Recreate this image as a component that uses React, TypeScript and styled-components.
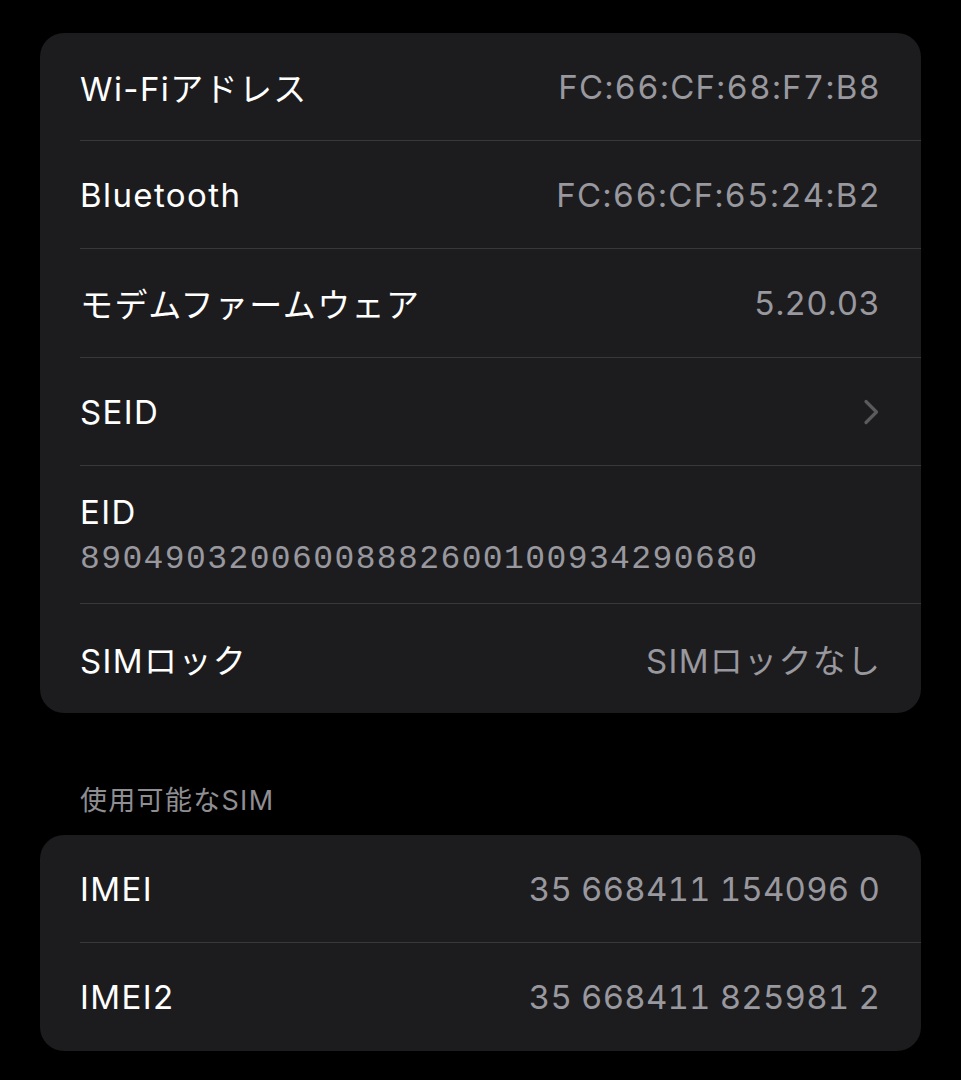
import React from "react";
import styled, { createGlobalStyle } from "styled-components";

const GlobalStyle = createGlobalStyle`
  html, body {
    margin: 0;
    padding: 0;
    background: #000000;
  }
  body {
    font-family: Inter, "Noto Sans CJK JP", sans-serif;
    -webkit-font-smoothing: antialiased;
  }
`;

const Page = styled.div`
  width: 961px;
  min-height: 1080px;
  box-sizing: border-box;
  padding: 33px 40px 0 40px;
  background: #000000;
  display: flex;
  flex-direction: column;
`;

const Card = styled.div`
  background: #1c1c1e;
  border-radius: 24px;
  overflow: hidden;
  display: flex;
  flex-direction: column;
`;

const Row = styled.div`
  padding-left: 40px;
  display: flex;
`;

const RowInner = styled.div<{ $tall?: boolean; $last?: boolean; $h: number }>`
  flex: 1;
  box-sizing: border-box;
  height: ${(p) => p.$h}px;
  padding-right: 41px;
  display: flex;
  flex-direction: ${(p) => (p.$tall ? "column" : "row")};
  align-items: ${(p) => (p.$tall ? "flex-start" : "center")};
  justify-content: ${(p) => (p.$tall ? "center" : "space-between")};
  border-bottom: ${(p) => (p.$last ? "none" : "1px solid #38383a")};
`;

const Label = styled.span`
  font-family: Inter, "Noto Sans CJK JP", sans-serif;
  font-size: 33px;
  color: #ffffff;
  letter-spacing: 1.4px;
`;

const Value = styled.span<{ $spaced?: boolean }>`
  font-family: Inter, "Noto Sans CJK JP", sans-serif;
  font-size: 33px;
  color: #98989e;
  font-variant-numeric: tabular-nums;
  letter-spacing: ${(p) => (p.$spaced ? "1.3px" : "0.2px")};
  margin-right: ${(p) => (p.$spaced ? "-1.3px" : "0")};
`;

const MonoValue = styled.span`
  font-family: "Liberation Mono", monospace;
  font-size: 33px;
  color: #98989e;
  letter-spacing: 1.4px;
  margin-top: 9px;
`;

const Chevron = styled.svg`
  width: 17px;
  height: 26px;
`;

const SectionHeader = styled.div`
  font-family: Inter, "Noto Sans CJK JP", sans-serif;
  font-size: 27px;
  color: #8e8e93;
  letter-spacing: 1.3px;
  padding: 72px 0 18px 40px;
  line-height: 32px;
`;

type Item = {
  label: string;
  value?: string;
  chevron?: boolean;
  mono?: boolean;
  spaced?: boolean;
  h: number;
};

const first: Item[] = [
  { label: "Wi-Fiアドレス", value: "FC:66:CF:68:F7:B8", spaced: true, h: 108 },
  { label: "Bluetooth", value: "FC:66:CF:65:24:B2", spaced: true, h: 108 },
  { label: "モデムファームウェア", value: "5.20.03", h: 109 },
  { label: "SEID", chevron: true, h: 108 },
  { label: "EID", value: "89049032006008882600100934290680", mono: true, h: 138 },
  { label: "SIMロック", value: "SIMロックなし", spaced: true, h: 109 },
];

const second: Item[] = [
  { label: "IMEI", value: "35 668411 154096 0", h: 108 },
  { label: "IMEI2", value: "35 668411 825981 2", h: 108 },
];

function renderRows(items: Item[]) {
  return items.map((it, i) => (
    <Row key={it.label}>
      <RowInner $tall={it.mono} $last={i === items.length - 1} $h={it.h}>
        <Label>{it.label}</Label>
        {it.mono ? (
          <MonoValue>{it.value}</MonoValue>
        ) : it.chevron ? (
          <Chevron viewBox="0 0 17 26" fill="none">
            <path
              d="M3 2.5 L13.5 13 L3 23.5"
              stroke="#5b5b5f"
              strokeWidth="3.2"
              strokeLinecap="round"
              strokeLinejoin="round"
            />
          </Chevron>
        ) : (
          <Value $spaced={it.spaced}>{it.value}</Value>
        )}
      </RowInner>
    </Row>
  ));
}

export default function App() {
  return (
    <>
      <GlobalStyle />
      <Page>
        <Card>{renderRows(first)}</Card>
        <SectionHeader>使用可能なSIM</SectionHeader>
        <Card>{renderRows(second)}</Card>
      </Page>
    </>
  );
}
